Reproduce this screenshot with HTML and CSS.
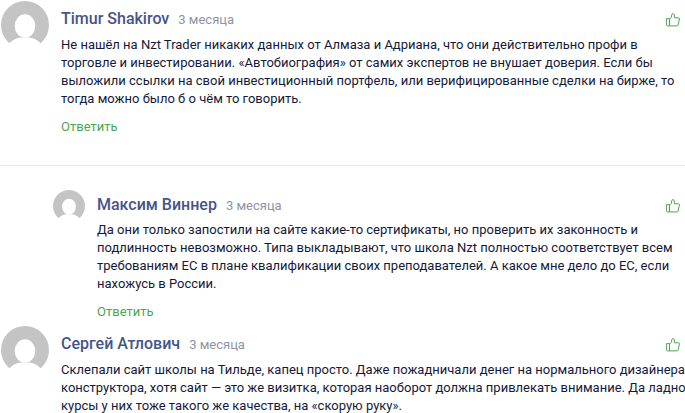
FILE: index.html
```html
<!doctype html>
<html lang="ru">
<head>
  <meta charset="utf-8">
  <title>Комментарии</title>
  <link rel="stylesheet" href="styles.css">
</head>
<body>
  <!-- Shared shapes for avatars and like buttons -->
  <svg class="sprite" aria-hidden="true">
    <symbol id="avatar" viewBox="0 0 48 48">
      <circle cx="24" cy="24" r="24" fill="#c4c4c4"/>
      <ellipse cx="24" cy="25" rx="10.3" ry="11.8" fill="#fff"/>
      <path d="M0 48V43.500H7.500C10 40 14 37.200 19 36.500H29C34 37.200 38 40 40.500 43.500H48V48z" fill="#fff"/>
    </symbol>
    <symbol id="like" viewBox="0 0 14 14">
      <path d="M.6 5.600h2.900v7.300H1.200L.6 12zM3.500 6.200l1.700-1.700L6 1.200C6.200.3 8.300.3 8.300 2v2.800h4.100c.8 0 1.100.5 1 1.200l-1.300 6c-.2.600-.6.900-1.200.9H3.500" fill="none" stroke="#4ca64c" stroke-width="1" stroke-linejoin="round"/>
    </symbol>
  </svg>

  <main class="comments">
    <article class="comment comment-divided">
      <svg class="avatar" aria-hidden="true"><use href="#avatar"/></svg>
      <div class="comment-body">
        <header class="comment-header">
          <a class="author" href="#">Timur Shakirov</a>
          <time class="date">3 месяца</time>
          <button class="like" type="button" aria-label="Нравится"><svg><use href="#like"/></svg></button>
        </header>
        <p class="text">Не нашёл на Nzt Trader никаких данных от Алмаза и Адриана, что они действительно профи в торговле и инвестировании. «Автобиография» от самих экспертов не внушает доверия. Если бы выложили ссылки на свой инвестиционный портфель, или верифицированные сделки на бирже, то тогда можно было б о чём то говорить.</p>
        <a class="answer" href="#">Ответить</a>
      </div>
    </article>

    <article class="comment comment-reply">
      <svg class="avatar" aria-hidden="true"><use href="#avatar"/></svg>
      <div class="comment-body">
        <header class="comment-header">
          <a class="author" href="#">Максим Виннер</a>
          <time class="date">3 месяца</time>
          <button class="like" type="button" aria-label="Нравится"><svg><use href="#like"/></svg></button>
        </header>
        <p class="text">Да они только запостили на сайте какие-то сертификаты, но проверить их законность и подлинность невозможно. Типа выкладывают, что школа Nzt полностью соответствует всем требованиям ЕС в плане квалификации своих преподавателей. А какое мне дело до ЕС, если нахожусь в России.</p>
        <a class="answer" href="#">Ответить</a>
      </div>
    </article>

    <article class="comment">
      <svg class="avatar" aria-hidden="true"><use href="#avatar"/></svg>
      <div class="comment-body">
        <header class="comment-header">
          <a class="author" href="#">Сергей Атлович</a>
          <time class="date">3 месяца</time>
          <button class="like" type="button" aria-label="Нравится"><svg><use href="#like"/></svg></button>
        </header>
        <p class="text text-wide">Склепали сайт школы на Тильде, капец просто. Даже пожадничали денег на нормального дизайнера<br>конструктора, хотя сайт — это же визитка, которая наоборот должна привлекать внимание. Да ладно<br>курсы у них тоже такого же качества, на «скорую руку».</p>
      </div>
    </article>
  </main>
</body>
</html>
```

FILE: styles.css
```css
body {
  margin: 0;
  background: #fff;
  color: #14193a;
  font: 13px/18px Roboto, "Liberation Sans", sans-serif;
  overflow-x: hidden;
}

a {
  text-decoration: none;
}

.sprite {
  display: none;
}

.comments {
  padding-top: 1px;
}

/* One comment: avatar on the left, text column on the right */
.comment {
  display: flex;
  align-items: flex-start;
  gap: 12px;
  padding-left: 1px;
}

.comment-divided {
  padding-bottom: 29px;
  border-bottom: 1px solid #ebebeb;
}

.comment-reply {
  padding: 24px 0 5px 53px;
}

.avatar {
  flex: none;
  width: 48px;
  height: 48px;
}

.comment-reply .avatar {
  width: 32px;
  height: 32px;
}

.comment-body {
  flex: 1;
  min-width: 0;
  padding-top: 8px;
}

.comment-reply .comment-body {
  padding-top: 5px;
}

.comment-header {
  display: flex;
  align-items: baseline;
  gap: 9px;
  margin-bottom: 6px;
  padding-right: 5px;
  line-height: 20px;
}

.comment-reply .comment-header {
  margin-bottom: 5px;
}

.author {
  color: #465588;
  font-size: 16px;
  font-weight: 500;
}

.date {
  color: #9093a3;
}

.like {
  align-self: center;
  margin-left: auto;
  padding: 0;
  border: 0;
  background: none;
  cursor: pointer;
}

.like svg {
  display: block;
  width: 14px;
  height: 14px;
}

.text {
  margin: 0 10px 10px 0;
}

.text-wide {
  margin-right: 0;
  white-space: nowrap;
}

.answer {
  display: block;
  color: #4ca64c;
}
```
